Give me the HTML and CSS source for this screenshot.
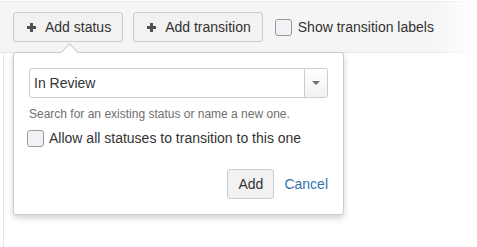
FILE: index.html
```html
<!DOCTYPE html>
<html>

<head>
  <title>workflow designer</title>
  <link rel="stylesheet" href="styles.css">
</head>

<body>
  <div class="toolbar">
    <button class="btn"><span class="plus"></span>Add status</button>
    <button class="btn"><span class="plus"></span>Add transition</button>
    <label class="check">
      <span class="box"></span>
      <span>Show transition labels</span>
    </label>
  </div>
  <div class="canvas"></div>

  <div class="popup">
    <div class="arrow"></div>
    <div class="select">
      <span class="select-value">In Review</span>
      <span class="select-drop"><span class="caret"></span></span>
    </div>
    <p class="help">Search for an existing status or name a new one.</p>
    <label class="check check-row">
      <span class="box"></span>
      <span>Allow all statuses to transition to this one</span>
    </label>
    <div class="actions">
      <button class="btn btn-small">Add</button>
      <a class="cancel" href="#">Cancel</a>
    </div>
  </div>
</body>

</html>
```

FILE: styles.css
```css
html,
body {
  margin: 0;
  height: 100%;
  background: #fff;
  color: #333;
  font: 14px/20px "Liberation Sans", Arial, sans-serif;
}

.toolbar {
  margin-top: 1px;
  padding: 10px 13px 0;
  box-sizing: border-box;
  height: 52px;
  display: flex;
  align-items: flex-start;
  background: linear-gradient(to right, #f5f5f5 90%, #fff 100%);
  border-top: 1px solid #ededed;
  border-bottom: 1px solid #e4e4e4;
  border-image: linear-gradient(to right, #e6e6e6 90%, #fff 100%) 1;
}

.btn {
  display: flex;
  align-items: center;
  height: 30px;
  padding: 0 11px 0 13px;
  margin-right: 10px;
  background: #f2f2f2;
  border: 1px solid #ccc;
  border-radius: 3px;
  color: #333;
  font: inherit;
}

.plus {
  position: relative;
  width: 9px;
  height: 9px;
  margin-right: 9px;
}

.plus::before,
.plus::after {
  content: "";
  position: absolute;
  background: #505050;
}

.plus::before {
  left: 0;
  top: 3px;
  width: 9px;
  height: 3px;
}

.plus::after {
  left: 3px;
  top: 0;
  width: 3px;
  height: 9px;
}

.check {
  display: flex;
  align-items: center;
  height: 30px;
  margin-left: 2px;
  color: #333;
}

.box {
  width: 15px;
  height: 15px;
  margin-right: 6px;
  border: 1px solid #999;
  border-radius: 3px;
  background: #f0f2f5;
}

.canvas {
  margin-left: 3px;
  height: calc(100% - 53px);
  border-left: 1px solid #e8e8e8;
}

.popup {
  position: absolute;
  left: 13px;
  top: 52px;
  width: 331px;
  box-sizing: border-box;
  padding: 15px;
  background: #fff;
  border: 1px solid #ccc;
  border-radius: 3px;
  box-shadow: 0 3px 6px rgba(0, 0, 0, 0.18);
}

.arrow {
  position: absolute;
  left: 49px;
  top: -7px;
  width: 12px;
  height: 12px;
  background: #fff;
  border-top: 1px solid #ccc;
  border-left: 1px solid #ccc;
  transform: rotate(45deg);
}

.select {
  display: flex;
  height: 30px;
  box-sizing: border-box;
  border: 1px solid #ccc;
  border-radius: 3px;
  overflow: hidden;
}

.select-value {
  flex: 1;
  padding: 4px 4px;
  line-height: 20px;
}

.select-drop {
  width: 22px;
  display: flex;
  align-items: center;
  justify-content: center;
  border-left: 1px solid #ccc;
  background: linear-gradient(#fff, #f2f2f2);
}

.caret {
  border-left: 4px solid transparent;
  border-right: 4px solid transparent;
  border-top: 4px solid #707070;
}

.help {
  margin: 8px 0 0;
  font-size: 12px;
  line-height: 16px;
  color: #707070;
}

.check-row {
  margin: 5px 0 0 -2px;
  height: 22px;
}

.check-row .box {
  margin-right: 5px;
}

.actions {
  display: flex;
  align-items: center;
  justify-content: flex-end;
  margin-top: 20px;
}

.btn-small {
  padding: 0 10px;
  margin-right: 10px;
}

.cancel {
  color: #3572b0;
  text-decoration: none;
}
```
